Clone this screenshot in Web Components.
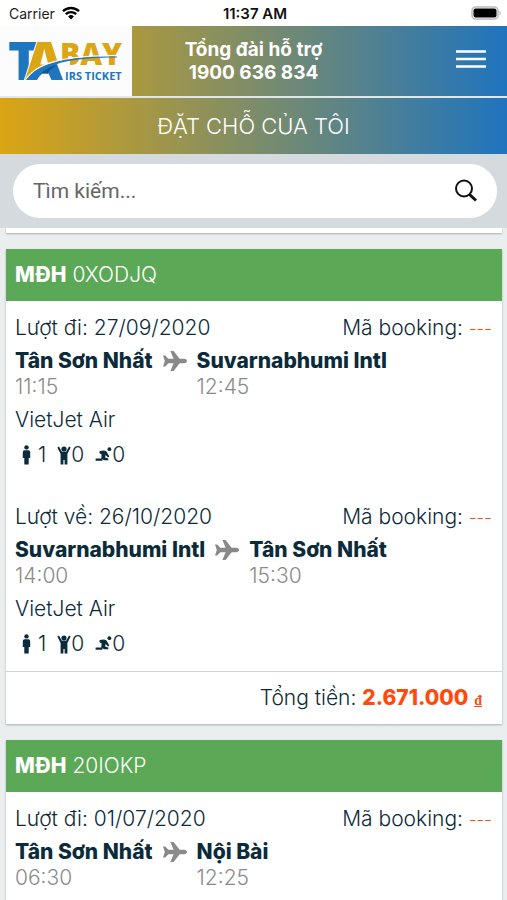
<!DOCTYPE html>
<html lang="vi">
<head>
<meta charset="utf-8">
<meta name="viewport" content="width=device-width, initial-scale=1">
<title>Đặt chỗ của tôi</title>
<style>
html, body { margin: 0; height: 100%; }
body { font-family: Inter, "Noto Sans", sans-serif; color: #0b2b3a; background: #ebeeef; overflow: hidden; }
</style>
</head>
<body>
<booking-app></booking-app>
<script>
const define = (name, html, init) => customElements.define(name, class extends HTMLElement {
  constructor() {
    super();
    this.attachShadow({ mode: "open" }).innerHTML = html;
  }
  connectedCallback() { if (init) init(this, this.shadowRoot); }
});

define("status-bar", `
<style>
:host { display: grid; grid-template-columns: 1fr auto 1fr; align-items: center; height: 26px; padding: 0 6px 0 9px; background: #fff; color: #222; font-size: 14px; }
.left { display: flex; align-items: center; gap: 7px; }
.time { font-weight: 600; color: #111; font-size: 15px; }
.battery { justify-self: end; }
svg { display: block; }
</style>
<span class="left">Carrier
  <svg width="18" height="14" viewBox="0 0 18 14" fill="none" stroke="#000" stroke-width="2.4" aria-hidden="true">
    <path d="M1 5.200a11.600 11.600 0 0 1 16 0M3.800 8.200a7.600 7.600 0 0 1 10.400 0"/>
    <path d="M9 13.600 6.100 10.400a4.200 4.200 0 0 1 5.800 0z" fill="#000" stroke="none"/>
  </svg>
</span>
<span class="time">11:37 AM</span>
<svg class="battery" width="30" height="14" viewBox="0 0 30 14" aria-hidden="true">
  <rect x="1" y="1" width="26" height="12" rx="3.500" fill="#fff" stroke="#bbb" stroke-width="1.500"/>
  <rect x="2.500" y="2.500" width="23" height="9" rx="2" fill="#000"/>
  <path d="M28.500 4.800c1.500.6 1.500 3.800 0 4.400z" fill="#aaa"/>
</svg>`);

define("tabay-logo", `
<style>
:host { display: block; width: 132px; height: 70px; background: #fcfcfd; }
svg { display: block; }
text { font-family: "Open Sans", sans-serif; font-weight: 800; }
.tagline { font-weight: 700; }
</style>
<svg width="132" height="70" viewBox="0 26 132 70" role="img" aria-label="Tabay Airs Ticket">
  <text x="8" y="80" font-size="53" fill="#1f76c0">T</text>
  <text x="25" y="80" font-size="53" fill="#dba514" stroke="#fcfcfd" stroke-width="2" paint-order="stroke">A</text>
  <text x="60" y="65" font-size="30" fill="#dba514">BAY</text>
  <path d="M24 81C36 65 50 61 70 60v22H24z" fill="#fcfcfd"/>
  <path d="M26 80C36 66 56 56 117 56.500v1C90 57.500 68 60 57 64l6 16H51.500l-3-6.500h-6.500Q39 76 37 80z" fill="#1f76c0"/>
  <path d="M39 77c3-6 9-10 18-12l-7.500 5.500-1.500 3h-6z" fill="#15568f"/>
  <path d="M26 79C36 65 56 55.500 117 55.500" fill="none" stroke="#fcfcfd"/>
  <text class="tagline" x="65" y="80" font-size="11" fill="#1f76c0">IRS TICKET</text>
</svg>`);

define("app-header", `
<style>
:host { display: flex; height: 70px; align-items: center; padding-right: 20px; background: linear-gradient(90deg, #dba514, #1f74be); border-bottom: 2px solid #e1e7e6; }
p { flex: 1; margin: 0; text-align: center; color: #fff; font-size: 19px; line-height: 23px; font-weight: 700; }
button { padding: 0; border: 0; background: none; width: 32px; height: 40px; margin-top: -4px; }
svg { display: block; }
.call { padding-right: 80px; }
</style>
<tabay-logo></tabay-logo>
<p class="call">Tổng đài hỗ trợ<br>1900 636 834</p>
<button type="button" aria-label="Menu">
  <svg width="32" height="40" viewBox="0 0 32 40" stroke="#fff" stroke-width="2.600" aria-hidden="true"><path d="M1 12.500h30M1 20h30M1 27.500h30"/></svg>
</button>`);

define("page-title", `
<style>
:host { display: block; background: linear-gradient(90deg, #dba514, #1f74be); }
h1 { margin: 0; text-align: center; color: #fff; font-size: 22px; line-height: 56px; font-weight: 300; }
</style>
<h1><slot></slot></h1>`);

define("search-box", `
<style>
:host { display: block; padding: 10px 10px 10px 13px; background: #d5dade; }
form { display: flex; align-items: center; height: 54px; border-radius: 27px; background: #fff; padding: 0 18px 0 20px; }
input { flex: 1; min-width: 0; border: 0; outline: 0; padding: 0; background: none; font: 21px Roboto, sans-serif; color: #333; }
input::placeholder { color: #666; opacity: 1; }
button { padding: 0; border: 0; background: none; }
svg { display: block; }
</style>
<form role="search">
  <input type="search" aria-label="Tìm kiếm" placeholder="Tìm kiếm...">
  <button type="button" aria-label="Tìm">
    <svg width="26" height="28" viewBox="0 0 26 28" fill="none" stroke="#111" aria-hidden="true">
      <circle cx="11" cy="11.500" r="8" stroke-width="2"/><path d="m16.500 17.500 6.500 6" stroke-width="3"/>
    </svg>
  </button>
</form>`);

define("flight-leg", `
<style>
:host { display: block; padding: 0 10px 0 9px; font-size: 21px; font-weight: 300; }
.top { display: flex; justify-content: space-between; line-height: 34px; }
.code { color: #ff4a0c; font-size: 17px; }
.route { display: grid; grid-template-columns: auto 24px auto; justify-content: start; column-gap: 10px; line-height: 22px; }
.city { font-weight: 800; line-height: 30px; }
.plane { align-self: center; }
.time { color: #8b8b8b; }
.to { grid-column: 3; }
.airline { line-height: 44px; }
.pax { display: flex; line-height: 26px; padding-left: 6px; gap: 11px; }
.pax span { display: flex; align-items: center; }
.pax .adult { gap: 6px; }
svg { display: block; fill: #0b2b3a; }
.plane { fill: #898989; }
</style>
<div class="top"><span class="date"></span><span>Mã booking: <span class="code">---</span></span></div>
<div class="route">
  <span class="city a"></span>
  <svg class="plane" width="24" height="22" viewBox="0 0 24 22" aria-hidden="true"><path d="M0 5.500h2.200l3.200 3.300h5.200L7.400 1h3.200l6 7.800h4.600c3.700.4 3.700 4 0 4.400h-4.600L10.600 21H7.400l3.200-7.800H5.400l-3.200 3.300H0L1.800 11z"/></svg>
  <span class="city b"></span>
  <span class="time d"></span><span class="time to e"></span>
</div>
<div class="airline"></div>
<div class="pax">
  <span class="adult"><svg width="11" height="20" viewBox="0 0 11 20" aria-label="Người lớn"><circle cx="5.500" cy="2.400" r="2.200"/><path d="M3.500 5.200h4q1.700 0 1.700 2V13H7.700v6.500H3.300V13H1.800V7.200q0-2 1.700-2z"/></svg>1</span>
  <span><svg width="14" height="20" viewBox="0 0 14 20" aria-label="Trẻ em"><circle cx="7" cy="4" r="2.600"/><path d="M2 1.600 4.800 6.700h4.400L12 1.600l1.600 1L10.400 9v10.500H7.600V15H6.400v4.500H3.600V9L.4 2.600z"/></svg>0</span>
  <span><svg width="17" height="20" viewBox="0 0 17 20" aria-label="Em bé"><circle cx="14.400" cy="4.200" r="1.900"/><path d="M4.500 6.200q5-1.600 7.200.6l2.600 4.700-1.300.9-2.400-2.500-.5 2.600 3.200 1v1.800H9l-2.700-2 .3-3.800-2.100-1.200zM.6 13.500h6.800v2.200H.6z"/></svg>0</span>
</div>`, (el, root) => {
  const put = (sel, attr) => root.querySelector(sel).textContent = el.getAttribute(attr);
  put(".date", "date"); put(".a", "from"); put(".b", "to"); put(".d", "departs"); put(".e", "arrives");
  if (el.hasAttribute("airline")) put(".airline", "airline");
  else { root.querySelector(".airline").remove(); root.querySelector(".pax").remove(); }
});

define("booking-card", `
<style>
:host { display: block; background: #fff; box-shadow: 0 1px 2px #0004; }
h2 { margin: 0; padding: 0 9px; background: #5ba957; color: #fff; font-size: 21px; line-height: 52px; font-weight: 300; }
b { font-weight: 800; }
.legs { display: grid; gap: 32px; padding: 10px 0 14px; }
.total { border-top: 1px solid #d2d5d6; padding: 0 20px; text-align: right; font-size: 21px; line-height: 52px; font-weight: 300; }
.total b { color: #ff4a0c; }
.total small { color: #ff4a0c; font: 700 14px "Liberation Serif", serif; text-decoration: underline; }
</style>
<h2><b>MĐH</b> <span class="code"></span></h2>
<div class="legs"><slot></slot></div>
<div class="total">Tổng tiền: <b></b> <small>đ</small></div>`, (el, root) => {
  root.querySelector(".code").textContent = el.getAttribute("code");
  if (el.hasAttribute("total")) root.querySelector(".total b").textContent = el.getAttribute("total");
  else root.querySelector(".total").remove();
});

define("booking-app", `
<style>
:host { display: flex; flex-direction: column; height: 100%; overflow: hidden; }
status-bar, app-header, page-title, search-box { flex: none; }
main { flex: 1; min-height: 0; overflow: hidden; padding: 0 5px 0 6px; }
.previous { height: 5px; background: #fff; box-shadow: 0 1px 2px #0004; margin-bottom: 16px; }
booking-card + booking-card { margin-top: 16px; }
</style>
<status-bar></status-bar>
<app-header></app-header>
<page-title>ĐẶT CHỖ CỦA TÔI</page-title>
<search-box></search-box>
<main>
  <div class="previous"></div>
  <booking-card code="0XODJQ" total="2.671.000">
    <flight-leg date="Lượt đi: 27/09/2020" from="Tân Sơn Nhất" to="Suvarnabhumi Intl" departs="11:15" arrives="12:45" airline="VietJet Air"></flight-leg>
    <flight-leg date="Lượt về: 26/10/2020" from="Suvarnabhumi Intl" to="Tân Sơn Nhất" departs="14:00" arrives="15:30" airline="VietJet Air"></flight-leg>
  </booking-card>
  <booking-card code="20IOKP">
    <flight-leg date="Lượt đi: 01/07/2020" from="Tân Sơn Nhất" to="Nội Bài" departs="06:30" arrives="12:25"></flight-leg>
  </booking-card>
</main>`);
</script>
</body>
</html>
